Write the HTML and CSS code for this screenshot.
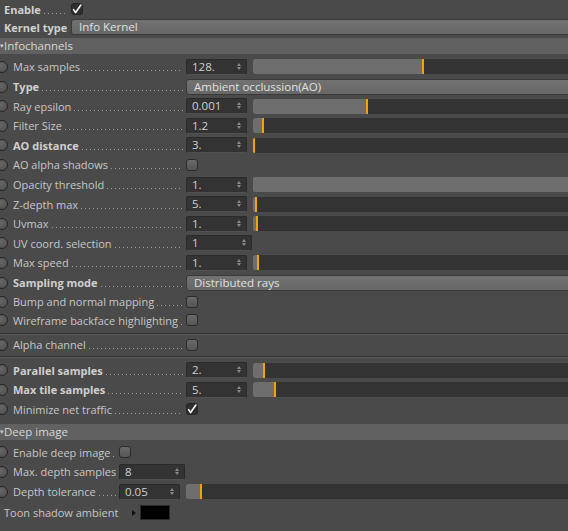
FILE: index.html
```html
<!DOCTYPE html>
<html lang="en">
    <head>
        <meta charset="UTF-8" />
        <title>Info Kernel</title>
        <link rel="stylesheet" href="styles.css">
    </head>
    <body>
        <div class="panel">
            <div class="row top">
                <div class="name short"><span class="txt bold">Enable</span><span class="dots"></span></div>
                <span class="check on"><svg width="10" height="10" viewBox="0 0 10 10"><path d="M1.6 5.6 L3.6 8.6 L8.9 1.1" fill="none" stroke="#f2f2f2" stroke-width="1.7" stroke-linecap="round" stroke-linejoin="round"/></svg></span>
            </div>
            <div class="row top">
                <div class="name short"><span class="txt bold">Kernel type</span></div>
                <div class="combo">Info Kernel</div>
            </div>

            <div class="group"><span class="tri">&#9662;</span>Infochannels</div>

            <div class="section">
                <div class="row">
                    <span class="radio"></span>
                    <div class="name"><span class="txt">Max samples</span><span class="dots"></span></div>
                    <div class="num">128.<span class="spin"></span></div>
                    <div class="slider"><div class="fill" style="width: 169px"></div></div>
                </div>
                <div class="row">
                    <span class="radio"></span>
                    <div class="name"><span class="txt bold">Type</span><span class="dots"></span></div>
                    <div class="combo">Ambient occlussion(AO)</div>
                </div>
                <div class="row">
                    <span class="radio"></span>
                    <div class="name"><span class="txt">Ray epsilon</span><span class="dots"></span></div>
                    <div class="num">0.001<span class="spin"></span></div>
                    <div class="slider"><div class="fill" style="width: 113px"></div></div>
                </div>
                <div class="row">
                    <span class="radio"></span>
                    <div class="name"><span class="txt">Filter Size</span><span class="dots"></span></div>
                    <div class="num">1.2<span class="spin"></span></div>
                    <div class="slider"><div class="fill" style="width: 9px"></div></div>
                </div>
                <div class="row">
                    <span class="radio"></span>
                    <div class="name"><span class="txt bold">AO distance</span><span class="dots"></span></div>
                    <div class="num">3.<span class="spin"></span></div>
                    <div class="slider"><div class="fill" style="width: 0px"></div></div>
                </div>
                <div class="row">
                    <span class="radio"></span>
                    <div class="name"><span class="txt">AO alpha shadows</span><span class="dots"></span></div>
                    <span class="check"></span>
                </div>
                <div class="row">
                    <span class="radio"></span>
                    <div class="name"><span class="txt">Opacity threshold</span><span class="dots"></span></div>
                    <div class="num">1.<span class="spin"></span></div>
                    <div class="slider"><div class="fill full"></div></div>
                </div>
                <div class="row">
                    <span class="radio"></span>
                    <div class="name"><span class="txt">Z-depth max</span><span class="dots"></span></div>
                    <div class="num">5.<span class="spin"></span></div>
                    <div class="slider"><div class="fill" style="width: 2px"></div></div>
                </div>
                <div class="row">
                    <span class="radio"></span>
                    <div class="name"><span class="txt">Uvmax</span><span class="dots"></span></div>
                    <div class="num">1.<span class="spin"></span></div>
                    <div class="slider"><div class="fill" style="width: 3px"></div></div>
                </div>
                <div class="row">
                    <span class="radio"></span>
                    <div class="name"><span class="txt">UV coord. selection</span><span class="dots"></span></div>
                    <div class="num wide">1<span class="spin"></span></div>
                </div>
                <div class="row">
                    <span class="radio"></span>
                    <div class="name"><span class="txt">Max speed</span><span class="dots"></span></div>
                    <div class="num">1.<span class="spin"></span></div>
                    <div class="slider"><div class="fill" style="width: 4px"></div></div>
                </div>
                <div class="row">
                    <span class="radio"></span>
                    <div class="name"><span class="txt bold">Sampling mode</span><span class="dots"></span></div>
                    <div class="combo">Distributed rays</div>
                </div>
                <div class="row small">
                    <span class="radio"></span>
                    <div class="name"><span class="txt">Bump and normal mapping</span><span class="dots"></span></div>
                    <span class="check"></span>
                </div>
                <div class="row small">
                    <span class="radio"></span>
                    <div class="name"><span class="txt">Wireframe backface highlighting</span><span class="dots"></span></div>
                    <span class="check"></span>
                </div>

                <div class="sep first"></div>

                <div class="row mid">
                    <span class="radio"></span>
                    <div class="name"><span class="txt">Alpha channel</span><span class="dots"></span></div>
                    <span class="check"></span>
                </div>

                <div class="sep second"></div>

                <div class="row">
                    <span class="radio"></span>
                    <div class="name"><span class="txt bold">Parallel samples</span><span class="dots"></span></div>
                    <div class="num">2.<span class="spin"></span></div>
                    <div class="slider"><div class="fill" style="width: 10px"></div></div>
                </div>
                <div class="row">
                    <span class="radio"></span>
                    <div class="name"><span class="txt bold">Max tile samples</span><span class="dots"></span></div>
                    <div class="num">5.<span class="spin"></span></div>
                    <div class="slider"><div class="fill" style="width: 21px"></div></div>
                </div>
                <div class="row">
                    <span class="radio"></span>
                    <div class="name"><span class="txt">Minimize net traffic</span><span class="dots"></span></div>
                    <span class="check on"><svg width="10" height="10" viewBox="0 0 10 10"><path d="M1.6 5.6 L3.6 8.6 L8.9 1.1" fill="none" stroke="#f2f2f2" stroke-width="1.7" stroke-linecap="round" stroke-linejoin="round"/></svg></span>
                </div>
            </div>

            <div class="group deep"><span class="tri">&#9662;</span>Deep image</div>

            <div class="section">
                <div class="row">
                    <span class="radio"></span>
                    <div class="name narrow"><span class="txt">Enable deep image</span><span class="dots"></span></div>
                    <span class="check"></span>
                </div>
                <div class="row">
                    <span class="radio"></span>
                    <div class="name narrow"><span class="txt">Max. depth samples</span><span class="dots"></span></div>
                    <div class="num wide">8<span class="spin"></span></div>
                </div>
                <div class="row">
                    <span class="radio"></span>
                    <div class="name narrow"><span class="txt">Depth tolerance</span><span class="dots"></span></div>
                    <div class="num">0.05<span class="spin"></span></div>
                    <div class="slider"><div class="fill" style="width: 14px"></div></div>
                </div>
                <div class="row toon">
                    <div class="name toonname"><span class="txt">Toon shadow ambient</span></div>
                    <span class="arrow"></span>
                    <span class="swatch"></span>
                </div>
            </div>
        </div>
    </body>
</html>
```

FILE: styles.css
```css
body {
    margin: 0;
    background-color: #4a4a4a;
    overflow: hidden;
    font-family: "Open Sans", "Noto Sans", sans-serif;
    font-size: 11px;
    color: #c6c6c6;
}

.panel {
    width: 580px;
}

.row {
    display: flex;
    align-items: center;
    height: 19.6px;
}
.row.small {
    height: 18.6px;
}
.row.mid {
    height: 19.5px;
}
.row.top {
    height: 18px;
    padding-left: 4px;
}
.row.toon {
    height: 21px;
    margin-top: 1px;
    padding-left: 4px;
}

.radio {
    flex: none;
    width: 10px;
    height: 10px;
    margin-left: -4px;
    margin-right: 5px;
    border-radius: 50%;
    border: 1px solid #262626;
    background-image: radial-gradient(circle at 40% 35%, #666, #4c4c4c);
}

.name {
    flex: none;
    display: flex;
    align-self: stretch;
    align-items: center;
    width: 170px;
    margin-right: 3px;
}
.name.short {
    width: 64px;
}
.name.narrow {
    width: 103px;
}
.name.toonname {
    width: 123px;
}

.txt {
    white-space: nowrap;
}
.bold {
    font-weight: 700;
    color: #cfcfcf;
}

.dots {
    flex: 1;
    align-self: stretch;
    margin-left: 3px;
    background-image: linear-gradient(to right, #9a9a9a 1px, transparent 1px);
    background-size: 4px 1px;
    background-repeat: repeat-x;
    background-position: 0 calc(50% + 4px);
}

.group {
    height: 16px;
    line-height: 16px;
    margin-top: 2px;
    margin-bottom: 3.2px;
    background-color: #616161;
    color: #d6d6d6;
    font-size: 11.5px;
}
.group.deep {
    margin-top: 5px;
    margin-bottom: 2.4px;
}
.tri {
    display: inline-block;
    width: 4px;
    font-size: 7px;
    overflow: hidden;
    vertical-align: top;
    color: #cfcfcf;
}

.check {
    flex: none;
    width: 10px;
    height: 10px;
    border: 1px solid #2c2c2c;
    border-radius: 3px;
    background-image: linear-gradient(#6a6a6a, #555);
    display: flex;
    align-items: center;
    justify-content: center;
}
.check.on {
    background-image: none;
    background-color: #2e2e2e;
    border-color: #252525;
}

.combo {
    flex: 1;
    height: 14px;
    line-height: 14px;
    padding-left: 7px;
    border: 1px solid #393939;
    border-radius: 3px;
    background-image: linear-gradient(#727272, #676767);
    color: #e0e0e0;
    font-size: 11.5px;
    white-space: nowrap;
}

.num {
    flex: none;
    position: relative;
    box-sizing: border-box;
    width: 61px;
    height: 16px;
    line-height: 14px;
    padding-left: 5px;
    border: 1px solid #2a2a2a;
    border-bottom-color: #505050;
    border-radius: 2px;
    background-color: #333;
    color: #cfcfcf;
    font-size: 11.5px;
}
.num.wide {
    width: 66px;
}

/* small up/down arrows of the spinner */
.spin {
    position: absolute;
    right: 5px;
    top: 3px;
    width: 0;
    height: 0;
    border-left: 2.5px solid transparent;
    border-right: 2.5px solid transparent;
    border-bottom: 3px solid #8a8a8a;
}
.spin::after {
    content: "";
    position: absolute;
    left: -2.5px;
    top: 4px;
    border-left: 2.5px solid transparent;
    border-right: 2.5px solid transparent;
    border-top: 3px solid #8a8a8a;
}

.slider {
    flex: 1;
    display: flex;
    height: 15px;
    margin-left: 6px;
    border-radius: 2px;
    background-color: #333;
    overflow: hidden;
}
.fill {
    flex: none;
    height: 100%;
    background-color: #6e6e6e;
    border-right: 2px solid #f5a300;
}
.fill.full {
    width: 100%;
    border-right: none;
}

.sep {
    height: 1px;
    background-color: #333;
    border-bottom: 1px solid #5a5a5a;
}
.sep.first {
    margin-top: 3.4px;
}
.sep.second {
    margin-top: 1.5px;
    margin-bottom: 2.5px;
}

.arrow {
    flex: none;
    width: 0;
    height: 0;
    margin-left: 2px;
    margin-right: 4px;
    border-top: 3px solid transparent;
    border-bottom: 3px solid transparent;
    border-left: 4px solid #111;
}
.swatch {
    flex: none;
    width: 28px;
    height: 13px;
    background-color: #000;
    border: 1px solid #2a2a2a;
}
```
